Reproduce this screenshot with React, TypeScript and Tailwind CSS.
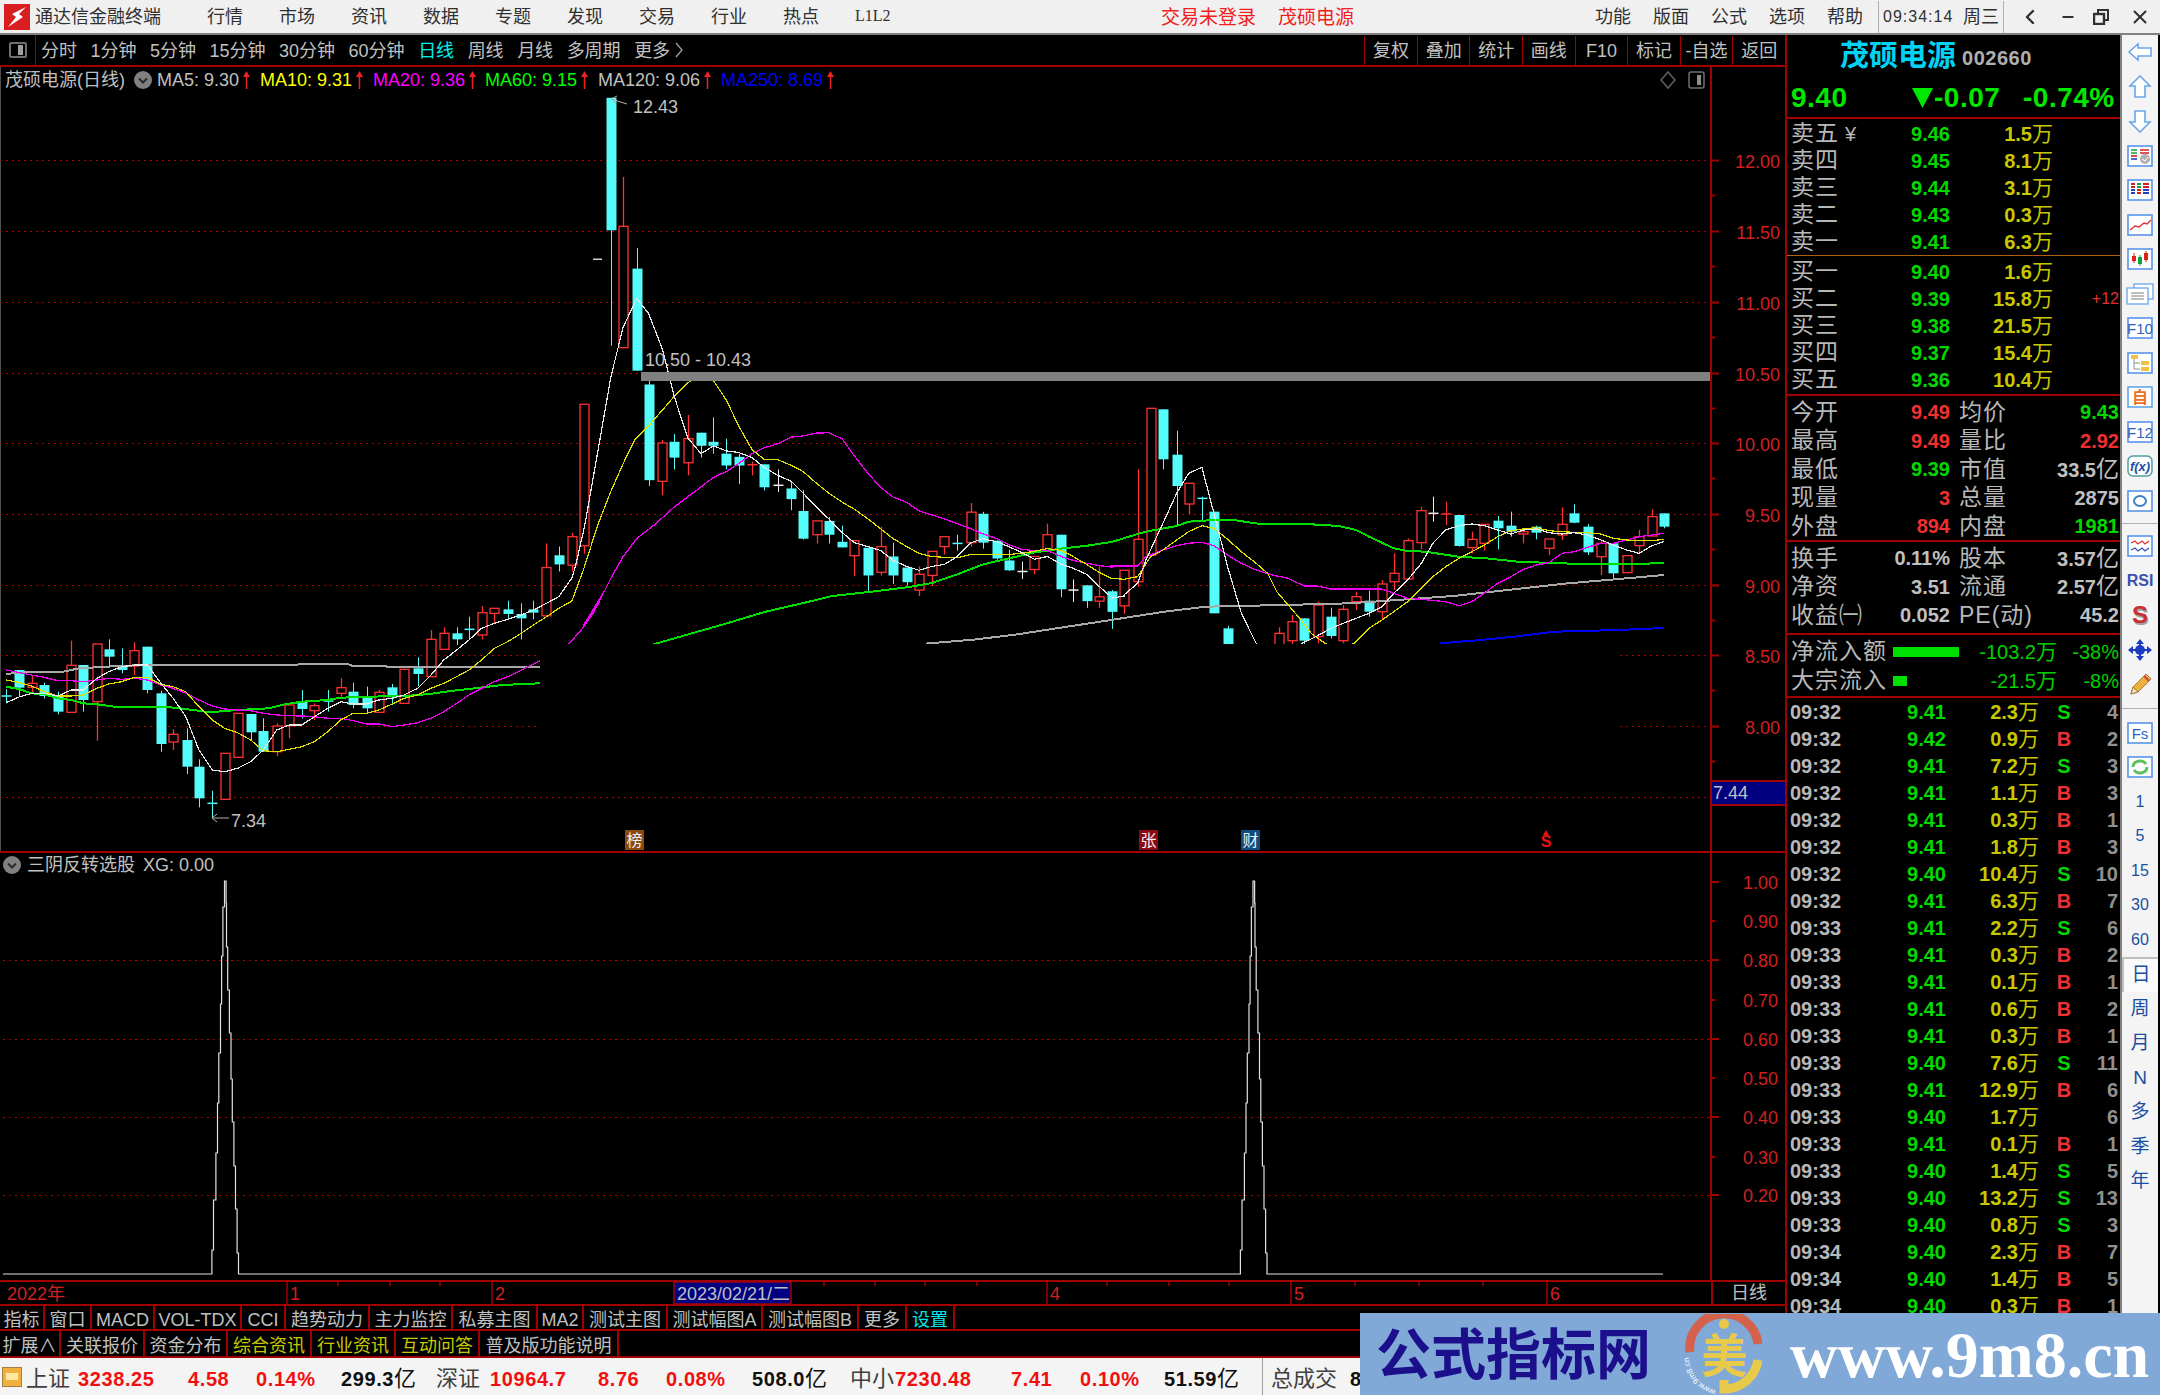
// App.tsx
import { ChevronLeft, Minus, X } from 'lucide-react';

type Seg = { sx: number; ox: number; sy: number; oy: number };
type Candle = [number, number, number, number, number, string];

// chart points were read off three crops, each with its own scale
const A: Seg = { sx: 2.529, ox: 0, sy: 3, oy: 560 };
const B: Seg = { sx: 2.529, ox: 520, sy: 2.529, oy: 80 };
const C: Seg = { sx: 2.178, ox: 1100, sy: 3, oy: 380 };

const px = (s: Seg, x: number) => s.ox + x / s.sx;
const py = (s: Seg, y: number) => s.oy + y / s.sy;

const pts = (s: Seg, str: string) =>
  str
    .trim()
    .split(/\s+/)
    .map((p) => {
      const [x, y] = p.split(',').map(Number);
      return `${px(s, x).toFixed(1)},${py(s, y).toFixed(1)}`;
    })
    .join(' ');

const candlesA: Candle[] = [
  [16, 388, 408, 408, 430, 'x'], [47, 330, 330, 383, 408, 'c'], [80, 345, 370, 382, 400, 'r'], [112, 368, 375, 408, 415, 'c'],
  [146, 395, 408, 455, 463, 'c'], [180, 242, 316, 457, 457, 'r'], [211, 315, 315, 420, 455, 'c'], [245, 252, 252, 425, 542, 'r'],
  [275, 238, 268, 290, 320, 'c'], [308, 265, 315, 330, 340, 'c'], [340, 247, 272, 318, 345, 'r'], [373, 260, 260, 390, 400, 'c'],
  [407, 392, 400, 552, 575, 'c'], [438, 508, 523, 546, 570, 'r'], [472, 505, 540, 620, 642, 'c'], [503, 598, 620, 715, 742, 'c'],
  [537, 692, 730, 730, 775, 'x'], [568, 580, 580, 718, 718, 'r'], [601, 460, 460, 592, 592, 'r'], [634, 462, 462, 517, 540, 'c'],
  [666, 475, 513, 575, 575, 'c'], [700, 490, 498, 575, 588, 'r'], [731, 430, 435, 497, 535, 'r'], [763, 390, 425, 447, 475, 'c'],
  [795, 430, 437, 452, 480, 'r'], [829, 390, 423, 423, 455, 'x'], [862, 355, 383, 400, 410, 'r'], [893, 368, 395, 435, 445, 'c'],
  [927, 380, 410, 445, 460, 'c'], [958, 390, 397, 457, 457, 'r'], [992, 372, 382, 412, 435, 'c'], [1022, 328, 328, 430, 430, 'r'],
  [1056, 292, 325, 342, 378, 'c'], [1090, 210, 238, 350, 350, 'r'], [1122, 202, 220, 268, 268, 'r'], [1155, 202, 220, 238, 255, 'c'],
  [1186, 170, 208, 208, 240, 'x'], [1218, 138, 158, 225, 238, 'r'], [1250, 145, 145, 160, 190, 'r'], [1284, 122, 148, 162, 175, 'c'],
  [1318, 130, 162, 175, 238, 'c'], [1349, 122, 148, 158, 178, 'c'],
];

const candlesB: Candle[] = [
  [67, 1172, 1233, 1355, 1355, 'r'], [98, 1180, 1202, 1225, 1243, 'c'], [131, 1145, 1155, 1227, 1243, 'r'], [163, 820, 820, 1178, 1198, 'r'],
  [230, 45, 45, 380, 672, 'c'], [261, 245, 370, 677, 677, 'r'], [295, 425, 477, 735, 735, 'c'], [325, 760, 770, 1012, 1027, 'c'],
  [360, 910, 918, 1015, 1050, 'r'], [390, 895, 915, 955, 985, 'c'], [424, 847, 907, 968, 1000, 'r'], [458, 892, 892, 925, 955, 'c'],
  [489, 853, 915, 925, 945, 'c'], [522, 907, 945, 975, 985, 'c'], [553, 945, 953, 975, 1022, 'c'], [587, 965, 973, 973, 1000, 'p'],
  [618, 972, 972, 1030, 1038, 'c'], [652, 985, 1025, 1025, 1042, 'w'], [686, 1015, 1033, 1060, 1088, 'c'], [716, 1037, 1090, 1160, 1162, 'c'],
  [750, 1115, 1115, 1150, 1172, 'r'], [781, 1105, 1115, 1150, 1172, 'c'], [815, 1127, 1168, 1182, 1182, 'c'], [845, 1165, 1165, 1203, 1255, 'r'],
  [880, 1183, 1183, 1253, 1295, 'c'], [912, 1130, 1180, 1245, 1253, 'r'], [944, 1170, 1205, 1253, 1275, 'c'], [978, 1233, 1233, 1270, 1278, 'c'],
  [1009, 1230, 1250, 1290, 1305, 'r'], [1042, 1192, 1192, 1253, 1280, 'r'], [1073, 1155, 1155, 1180, 1200, 'r'], [1106, 1150, 1172, 1172, 1190, 'x'],
  [1141, 1070, 1093, 1170, 1180, 'r'], [1171, 1092, 1097, 1170, 1185, 'c'], [1206, 1165, 1165, 1210, 1213, 'c'], [1236, 1188, 1215, 1240, 1242, 'c'],
  [1269, 1218, 1243, 1243, 1262, 'w'], [1301, 1205, 1205, 1238, 1250, 'r'], [1334, 1122, 1150, 1190, 1190, 'r'], [1369, 1150, 1150, 1288, 1308, 'c'],
  [1399, 1263, 1290, 1290, 1320, 'w'], [1433, 1278, 1278, 1318, 1335, 'c'], [1464, 1230, 1307, 1318, 1335, 'r'], [1498, 1290, 1293, 1345, 1388, 'c'],
  [1528, 1240, 1240, 1330, 1350, 'r'],
];

const candlesC: Candle[] = [
  [82, 268, 478, 605, 620, 'r'], [110, 85, 85, 525, 525, 'r'], [137, 88, 88, 238, 268, 'c'], [167, 152, 224, 318, 435, 'c'],
  [193, 310, 310, 372, 402, 'r'], [222, 350, 355, 355, 425, 'x'], [248, 395, 395, 700, 700, 'c'], [278, 738, 745, 800, 800, 'c'],
  [390, 742, 760, 800, 800, 'r'], [418, 705, 725, 782, 800, 'r'], [445, 715, 715, 782, 792, 'c'], [474, 665, 675, 770, 790, 'r'],
  [503, 683, 710, 768, 775, 'c'], [530, 675, 688, 782, 790, 'r'], [558, 635, 650, 665, 690, 'r'], [586, 632, 662, 695, 710, 'c'],
  [614, 600, 612, 695, 720, 'r'], [640, 520, 580, 605, 630, 'r'], [670, 475, 482, 597, 597, 'r'], [700, 382, 392, 488, 508, 'r'],
  [725, 350, 400, 400, 425, 'w'], [753, 365, 402, 402, 435, 'p'], [782, 405, 405, 498, 500, 'c'], [810, 455, 478, 503, 520, 'r'],
  [837, 433, 433, 490, 512, 'r'], [866, 408, 422, 445, 508, 'c'], [895, 395, 437, 455, 470, 'c'], [922, 455, 455, 462, 490, 'r'],
  [950, 437, 440, 458, 478, 'c'], [978, 477, 477, 505, 525, 'r'], [1006, 382, 433, 465, 480, 'r'], [1033, 373, 400, 428, 430, 'c'],
  [1062, 432, 440, 517, 525, 'c'], [1091, 478, 490, 530, 585, 'r'], [1118, 490, 490, 580, 598, 'c'], [1147, 527, 527, 578, 578, 'r'],
  [1174, 450, 470, 497, 522, 'r'], [1202, 388, 410, 468, 468, 'r'], [1228, 400, 400, 440, 445, 'c'],
];

const ma5 = [
  pts(A, '16,428 50,410 80,400 112,400 146,408 180,390 211,390 245,355 275,335 308,320 340,315 373,315 407,370 438,415 470,470 503,570 537,630 568,635 601,625 634,605 666,570 700,510 731,495 763,495 795,470 829,445 862,425 893,432 927,432 958,420 992,415 1022,405 1056,385 1090,345 1122,300 1155,270 1186,240 1218,205 1250,190 1284,178 1318,165 1349,150 1382,130 1413,110'),
  pts(B, '131,1260 140,1230 163,1130 195,950 230,750 261,625 295,553 325,590 360,680 390,800 424,905 458,945 489,925 522,938 553,942 587,955 618,980 652,1000 686,1015 716,1045 750,1080 781,1110 815,1145 845,1170 880,1180 912,1190 944,1215 978,1230 1009,1240 1042,1230 1073,1225 1106,1205 1141,1170 1171,1160 1206,1168 1236,1180 1269,1195 1301,1212 1334,1205 1369,1225 1399,1235 1433,1250 1464,1280 1498,1310 1528,1305'),
  pts(C, '52,645 82,610 100,540 110,510 137,430 167,340 193,280 222,262 248,400 278,560 308,700 340,790 385,890 440,790 470,770 503,745 530,730 558,715 586,700 614,680 640,640 670,600 700,550 725,490 753,450 782,437 810,432 837,437 866,450 895,462 922,450 950,447 978,458 1006,462 1033,458 1062,465 1091,480 1118,495 1147,510 1174,520 1202,497 1228,485'),
].join(' ');

const ma10 = [
  pts(A, '16,360 50,368 80,378 112,395 146,408 180,408 211,405 245,385 275,372 308,365 340,352 373,352 407,373 438,380 470,395 503,440 537,480 568,505 601,518 634,540 666,572 700,575 731,568 763,560 795,545 829,515 862,480 893,460 927,460 958,450 992,432 1022,415 1056,405 1090,385 1122,370 1155,350 1186,330 1218,300 1250,265 1284,245 1318,220 1349,195 1382,170 1413,145'),
  pts(B, '131,1318 160,1240 195,1130 230,1040 261,970 290,910 325,875 360,835 390,800 425,765 460,747 489,760 522,810 553,875 587,935 618,960 652,960 686,975 716,990 750,1020 781,1045 815,1068 845,1085 880,1110 912,1135 944,1160 978,1180 1009,1197 1042,1205 1073,1207 1106,1208 1141,1200 1171,1200 1206,1200 1236,1200 1269,1197 1301,1192 1334,1185 1369,1190 1399,1205 1433,1225 1464,1245 1498,1262'),
  pts(C, '25,595 52,598 82,590 110,530 137,510 167,480 193,455 222,437 248,445 278,478 308,515 340,550 365,580 385,635 410,675 435,715 460,760 490,790 520,810 553,790 586,745 614,720 640,695 670,665 700,625 725,590 753,560 782,535 810,515 837,495 866,470 895,452 922,447 950,443 978,452 1006,455 1033,457 1062,458 1091,462 1118,475 1147,480 1174,482 1202,482 1228,478'),
].join(' ');

const ma20 = [
  pts(A, '16,330 50,338 80,345 112,352 146,362 180,362 211,365 245,360 275,355 308,358 340,355 373,360 407,375 438,385 470,400 503,420 537,438 568,447 601,450 634,452 666,460 700,465 731,467 763,468 795,470 829,475 862,475 893,482 927,492 958,492 992,500 1022,495 1056,488 1090,475 1122,455 1155,430 1186,405 1218,385 1250,365 1284,350 1318,330 1365,302 1440,250 1470,210 1500,160 1530,90'),
  pts(B, '160,1380 195,1330 230,1260 261,1205 295,1160 340,1125 390,1080 450,1035 489,1005 522,990 553,970 587,945 618,930 652,920 686,903 716,900 750,893 781,892 815,908 845,950 880,995 912,1030 944,1055 978,1068 1009,1090 1042,1100 1073,1110 1106,1122 1141,1135 1171,1148 1206,1160 1236,1175 1269,1187 1301,1190 1334,1190 1369,1205 1399,1215 1433,1222 1464,1228 1498,1232'),
  pts(C, '25,558 82,558 100,530 137,510 167,497 193,490 222,487 248,497 278,525 308,550 340,570 375,585 410,595 445,618 474,618 503,627 558,627 614,627 640,640 670,655 700,658 753,665 782,677 810,665 837,640 866,610 895,590 922,568 950,555 978,548 1006,520 1033,515 1062,502 1091,490 1118,490 1147,480 1174,470 1202,465 1228,460'),
].join(' ');

const ma60 = [
  pts(A, '16,380 50,388 80,400 112,403 146,415 180,420 211,430 245,433 290,440 360,442 430,442 490,450 530,457 601,450 680,445 720,433 763,425 829,420 862,413 930,410 1022,408 1056,405 1100,400 1140,393 1200,385 1270,375 1365,370'),
  pts(B, '345,1425 450,1395 520,1375 620,1345 720,1322 790,1305 880,1295 985,1282 1042,1272 1106,1250 1171,1225 1236,1210 1301,1195 1369,1185 1433,1178 1498,1168'),
  pts(C, '82,462 100,455 167,438 193,425 248,420 290,420 350,432 460,433 520,438 558,450 586,470 640,505 670,513 710,515 780,530 840,535 910,545 1000,550 1080,553 1228,550'),
].join(' ');

const ma120 = [
  pts(A, '16,342 50,338 100,335 160,335 200,325 300,318 370,315 745,316 760,312 880,312 890,317 975,317 980,322 1365,320'),
  pts(B, '1000,1460 1030,1425 1150,1415 1250,1403 1400,1380'),
  pts(C, '0,725 70,710 140,695 230,680 400,675 545,670 770,648 940,622 1020,610 1130,597 1228,585'),
].join(' ');

const ma250 = pts(C, '740,790 830,780 900,770 990,755 1130,750 1228,744');

const allCandles = [
  ...candlesA.map((c) => ({ c, s: A })),
  ...candlesB.map((c) => ({ c, s: B })),
  ...candlesC.map((c) => ({ c, s: C })),
];

const priceY = (p: number) => Math.round(726 - (p - 8) * 141.4) + 0.5;
const priceLabels = [12, 11.5, 11, 10.5, 10, 9.5, 9, 8.5, 8];

function CandleMark({ c, s }: { c: Candle; s: Seg }) {
  const [x, wt, bt, bb, wb, t] = c;
  const cx = Math.round(px(s, x)) + 0.5;
  const yWt = py(s, wt);
  const yBt = py(s, bt);
  const yBb = py(s, bb);
  const yWb = py(s, wb);
  if (t === 'x' || t === 'w' || t === 'p') {
    const col = t === 'x' ? '#54fcfc' : t === 'w' ? '#f0f0f0' : '#ff3232';
    return (
      <g stroke={col} strokeWidth={1}>
        <line x1={cx} x2={cx} y1={yWt} y2={yWb} />
        <line x1={cx - 5} x2={cx + 5} y1={yBt} y2={yBt} strokeWidth={1.5} />
      </g>
    );
  }
  if (t === 'c') {
    return (
      <g>
        <line x1={cx} x2={cx} y1={yWt} y2={yWb} stroke="#54fcfc" />
        <rect x={cx - 5} y={yBt} width={10} height={yBb - yBt} fill="#54fcfc" />
      </g>
    );
  }
  return (
    <g stroke="#ff3232" strokeWidth={1.3}>
      <line x1={cx} x2={cx} y1={yWt} y2={yBt} />
      <line x1={cx} x2={cx} y1={yBb} y2={yWb} />
      <rect x={cx - 4.5} y={yBt} width={9} height={yBb - yBt} fill="#000" />
    </g>
  );
}

function MainChart() {
  return (
    <svg width={1787} height={784} viewBox="0 67 1787 784" className="block">
      <line x1={0.5} x2={0.5} y1={67} y2={851} stroke="#505050" />
      {[...priceLabels, 7.5].map((p) => (
        <line key={p} x1={0} x2={1711} y1={priceY(p)} y2={priceY(p)} stroke="#b00000" strokeDasharray="2 4" shapeRendering="crispEdges" />
      ))}
      {allCandles.map(({ c, s }, i) => (
        <CandleMark key={i} c={c} s={s} />
      ))}
      <rect x={593} y={258.5} width={9} height={1.5} fill="#d0d0d0" />
      <polyline points={ma120} fill="none" stroke="#a8a8a8" strokeWidth={2} shapeRendering="crispEdges" />
      <polyline points={ma60} fill="none" stroke="#00e000" strokeWidth={2} shapeRendering="crispEdges" />
      <polyline points={ma20} fill="none" stroke="#f000f0" strokeWidth={1.3} shapeRendering="crispEdges" />
      <polyline points={ma10} fill="none" stroke="#e0e000" strokeWidth={1.2} shapeRendering="crispEdges" />
      <polyline points={ma5} fill="none" stroke="#e8e8e8" strokeWidth={1.2} shapeRendering="crispEdges" />
      <polyline points={ma250} fill="none" stroke="#0000f0" strokeWidth={2} shapeRendering="crispEdges" />
      <rect x={540} y={644} width={1080} height={126} fill="#000" />
      <rect x={641} y={372} width={1070} height={9} fill="#808080" />
      <text x={645} y={366} fontSize={18} fill="#c0c0c0">10.50 - 10.43</text>
      <path d="M611 99 L627 104 M611 99 L617 96 M611 99 L616 103" stroke="#b0b0b0" fill="none" />
      <text x={633} y={113} fontSize={18} fill="#c0c0c0">12.43</text>
      <path d="M212 818 L229 818 M212 818 L217 814 M212 818 L217 822" stroke="#b0b0b0" fill="none" />
      <text x={231} y={827} fontSize={18} fill="#c0c0c0">7.34</text>

      <rect x={625} y={830} width={19} height={20} fill="#8a4a10" />
      <text x={634.5} y={846} fontSize={16} fill="#f0f0f0" textAnchor="middle">榜</text>
      <rect x={1139} y={830} width={19} height={20} fill="#8b0a14" />
      <text x={1148.5} y={846} fontSize={16} fill="#f0f0f0" textAnchor="middle">张</text>
      <rect x={1241} y={830} width={19} height={20} fill="#0f4a80" />
      <text x={1250.5} y={846} fontSize={16} fill="#f0f0f0" textAnchor="middle">财</text>
      <path d="M1546 830 L1549 835 L1543 835 Z" fill="#f01010" />
      <text x={1546} y={847} fontSize={16} fontWeight={700} fill="#f01010" textAnchor="middle">S</text>

      <line x1={1711} x2={1711} y1={67} y2={851} stroke="#a00000" strokeWidth={2} />
      {priceLabels.map((p) => (
        <g key={p}>
          <line x1={1711} x2={1719} y1={priceY(p)} y2={priceY(p)} stroke="#a00000" strokeWidth={2} />
          <line x1={1711} x2={1715} y1={priceY(p) + 35} y2={priceY(p) + 35} stroke="#a00000" strokeWidth={2} />
          <text x={1780} y={priceY(p) + 7} fontSize={18} fill="#d02020" textAnchor="end">{p.toFixed(2)}</text>
        </g>
      ))}
      <rect x={1711} y={781} width={75} height={24} fill="#000080" stroke="#a00000" strokeWidth={2} />
      <text x={1713} y={799} fontSize={18} fill="#c0c0c0">7.44</text>

      <path d="M1668 72 L1675 80 L1668 88 L1661 80 Z" fill="none" stroke="#606060" strokeWidth={1.5} />
      <rect x={1689} y={72} width={15} height={16} rx={2} fill="none" stroke="#707070" strokeWidth={1.5} />
      <rect x={1697} y={75} width={4} height={10} fill="#909090" />
    </svg>
  );
}

const peakLeft: [number, number][] = [[-12.6, 1274], [-12.6, 1250], [-11, 1250], [-11, 1200], [-8.6, 1200], [-8.6, 1153], [-7, 1153], [-7, 1103], [-5.7, 1103], [-5.7, 1053], [-4, 1053], [-4, 1004], [-2.9, 1004], [-2.9, 956], [-1.6, 956], [-1.6, 907], [0, 907], [0, 881]];
const peakRight: [number, number][] = [[1.6, 881], [1.6, 903], [2, 903], [2, 947], [3.2, 947], [3.2, 990], [4.9, 990], [4.9, 1033], [6.5, 1033], [6.5, 1079], [7.8, 1079], [7.8, 1122], [9.4, 1122], [9.4, 1166], [11, 1166], [11, 1209], [12.6, 1209], [12.6, 1253], [14, 1253], [14, 1274]];

const peak = (cx: number) => [...peakLeft, ...peakRight].map(([d, y]) => `${(cx + d).toFixed(1)},${y}`).join(' ');

function IndicatorChart() {
  const labels: [string, number][] = [['1.00', 882], ['0.90', 921], ['0.80', 960], ['0.70', 1000], ['0.60', 1039], ['0.50', 1078], ['0.40', 1117], ['0.30', 1157], ['0.20', 1195]];
  return (
    <svg width={1787} height={427} viewBox="0 853 1787 427" className="block">
      {[960, 1039, 1117, 1195].map((y) => (
        <line key={y} x1={3} x2={1711} y1={y + 0.5} y2={y + 0.5} stroke="#b00000" strokeDasharray="2 4" shapeRendering="crispEdges" />
      ))}
      <polyline points={`3,1274 ${peak(224.5)} ${peak(1253)} 1663,1274`} fill="none" stroke="#e0e0e0" strokeWidth={1.2} />
      <line x1={1711} x2={1711} y1={853} y2={1280} stroke="#a00000" strokeWidth={2} />
      {labels.map(([t, y], i) => (
        <g key={t}>
          <line x1={1711} x2={i % 2 === 0 ? 1719 : 1715} y1={y} y2={y} stroke="#a00000" strokeWidth={2} />
          <text x={1778} y={y + 7} fontSize={18} fill="#d02020" textAnchor="end">{t}</text>
        </g>
      ))}
    </svg>
  );
}

function DateAxis() {
  const major: [string, number][] = [['1', 287], ['2', 492], ['4', 1047], ['5', 1291], ['6', 1547]];
  const minor = [338, 390, 440, 824, 875, 925, 977, 1107, 1169, 1229, 1355, 1419, 1483];
  return (
    <svg width={1711} height={22} viewBox="0 1282 1711 22" className="block">
      <text x={7} y={1300} fontSize={18} fill="#d02020">2022年</text>
      {minor.map((x) => (
        <line key={x} x1={x} x2={x} y1={1282} y2={1286} stroke="#a00000" strokeWidth={1.5} />
      ))}
      {major.map(([t, x]) => (
        <g key={t}>
          <line x1={x} x2={x} y1={1282} y2={1304} stroke="#a00000" strokeWidth={1.5} />
          <text x={x + 3} y={1300} fontSize={18} fill="#d02020">{t}</text>
        </g>
      ))}
      <rect x={674} y={1282} width={117} height={22} fill="#000080" stroke="#a00000" strokeWidth={1.5} />
      <text x={677} y={1300} fontSize={18} fill="#c0c0c0">2023/02/21/二</text>
    </svg>
  );
}

function CircleChevron() {
  return (
    <svg width={18} height={18} viewBox="0 0 18 18">
      <circle cx={9} cy={9} r={9} fill="#808080" />
      <path d="M5 7.5 L9 11.5 L13 7.5" fill="none" stroke="#2a2a2a" strokeWidth={2} />
    </svg>
  );
}

function UpMark() {
  return (
    <svg width={9} height={20} viewBox="0 0 9 20" className="ml-[3px] shrink-0">
      <path d="M4.5 1 L8 7 L1 7 Z" fill="#f02020" />
      <line x1={4.5} x2={4.5} y1={6} y2={19} stroke="#f02020" strokeWidth={1.5} />
    </svg>
  );
}

const legend = [
  { t: 'MA5: 9.30', w: 'w-[103px]', c: 'text-[#c0c0c0]' },
  { t: 'MA10: 9.31', w: 'w-[113px]', c: 'text-[#ffff00]' },
  { t: 'MA20: 9.36', w: 'w-[112px]', c: 'text-[#ff00ff]' },
  { t: 'MA60: 9.15', w: 'w-[113px]', c: 'text-[#00ff00]' },
  { t: 'MA120: 9.06', w: 'w-[123px]', c: 'text-[#c0c0c0]' },
  { t: 'MA250: 8.69', w: 'w-[120px]', c: 'text-[#0000ff]' },
];

const periods = ['分时', '1分钟', '5分钟', '15分钟', '30分钟', '60分钟', '日线', '周线', '月线', '多周期', '更多'];
const toolButtons = ['复权', '叠加', '统计', '画线', 'F10', '标记', '-自选', '返回'];

const tabsOne = [
  { t: '指标', w: 'w-[45px]' }, { t: '窗口', w: 'w-[47px]' }, { t: 'MACD', w: 'w-[63px]' }, { t: 'VOL-TDX', w: 'w-[87px]' },
  { t: 'CCI', w: 'w-[44px]' }, { t: '趋势动力', w: 'w-[84px]' }, { t: '主力监控', w: 'w-[83px]' }, { t: '私募主图', w: 'w-[85px]' },
  { t: 'MA2', w: 'w-[46px]' }, { t: '测试主图', w: 'w-[84px]' }, { t: '测试幅图A', w: 'w-[95px]' }, { t: '测试幅图B', w: 'w-[96px]' },
  { t: '更多', w: 'w-[48px]' }, { t: '设置', w: 'w-[48px]', c: 'text-[#00e8e8]' },
];

const tabsTwo = [
  { t: '扩展∧', w: 'w-[61px]' }, { t: '关联报价', w: 'w-[84px]' }, { t: '资金分布', w: 'w-[83px]' }, { t: '综合资讯', w: 'w-[84px]', c: 'text-[#c8c800]' },
  { t: '行业资讯', w: 'w-[84px]', c: 'text-[#c8c800]' }, { t: '互动问答', w: 'w-[84px]', c: 'text-[#c8c800]' }, { t: '普及版功能说明', w: 'w-[139px]' },
];

const sellRows = [
  ['卖五', '9.46', '1.5'], ['卖四', '9.45', '8.1'], ['卖三', '9.44', '3.1'], ['卖二', '9.43', '0.3'], ['卖一', '9.41', '6.3'],
];
const buyRows = [
  ['买一', '9.40', '1.6'], ['买二', '9.39', '15.8'], ['买三', '9.38', '21.5'], ['买四', '9.37', '15.4'], ['买五', '9.36', '10.4'],
];

const GREEN = 'text-[#00d800]';
const RED = 'text-[#f03030]';
const GREY = 'text-[#c0c0c0]';

const statRows = [
  ['今开', '9.49', RED, '均价', '9.43', '', GREEN],
  ['最高', '9.49', RED, '量比', '2.92', '', RED],
  ['最低', '9.39', GREEN, '市值', '33.5', '亿', GREY],
  ['现量', '3', RED, '总量', '2875', '', GREY],
  ['外盘', '894', RED, '内盘', '1981', '', GREEN],
];
const fundRows = [
  ['换手', '0.11%', GREY, '股本', '3.57', '亿', GREY],
  ['净资', '3.51', GREY, '流通', '2.57', '亿', GREY],
  ['收益㈠', '0.052', GREY, 'PE(动)', '45.2', '', GREY],
];

const ticks: [string, string, string, string, string][] = [
  ['09:32', '9.41', '2.3', 'S', '4'], ['09:32', '9.42', '0.9', 'B', '2'], ['09:32', '9.41', '7.2', 'S', '3'], ['09:32', '9.41', '1.1', 'B', '3'],
  ['09:32', '9.41', '0.3', 'B', '1'], ['09:32', '9.41', '1.8', 'B', '3'], ['09:32', '9.40', '10.4', 'S', '10'], ['09:32', '9.41', '6.3', 'B', '7'],
  ['09:33', '9.41', '2.2', 'S', '6'], ['09:33', '9.41', '0.3', 'B', '2'], ['09:33', '9.41', '0.1', 'B', '1'], ['09:33', '9.41', '0.6', 'B', '2'],
  ['09:33', '9.41', '0.3', 'B', '1'], ['09:33', '9.40', '7.6', 'S', '11'], ['09:33', '9.41', '12.9', 'B', '6'], ['09:33', '9.40', '1.7', '', '6'],
  ['09:33', '9.41', '0.1', 'B', '1'], ['09:33', '9.40', '1.4', 'S', '5'], ['09:33', '9.40', '13.2', 'S', '13'], ['09:33', '9.40', '0.8', 'S', '3'],
  ['09:34', '9.40', '2.3', 'B', '7'], ['09:34', '9.40', '1.4', 'B', '5'], ['09:34', '9.40', '0.3', 'B', '1'],
];

function Wan({ v }: { v: string }) {
  return (
    <span className="text-[#c8c800]">
      <b>{v}</b>
      <span className="text-[21px]">万</span>
    </span>
  );
}

function QuoteRows({ rows }: { rows: string[][] }) {
  return (
    <>
      {rows.map((r) => (
        <div key={r[0]} className="grid h-[28.5px] grid-cols-[163px_169px] items-center">
          <div className="flex items-center justify-between pl-1">
            <span className="text-[23px] tracking-[1px] text-[#b8b8b8]">{r[0]}</span>
            <b className={r[2]}>{r[1]}</b>
          </div>
          <div className="flex items-center justify-between pl-[9px]">
            <span className="text-[23px] tracking-[1px] text-[#b8b8b8]">{r[3]}</span>
            <span className={r[6]}>
              <b>{r[4]}</b>
              {r[5] && <span className="text-[23px]">{r[5]}</span>}
            </span>
          </div>
        </div>
      ))}
    </>
  );
}

function Frame({ children, stroke = '#4f8de8' }: { children: React.ReactNode; stroke?: string }) {
  return (
    <svg width={26} height={22} viewBox="0 0 26 22">
      <rect x={1} y={1} width={24} height={20} fill="#fff" stroke={stroke} strokeWidth={1.5} />
      {children}
    </svg>
  );
}

function Arrow({ d }: { d: string }) {
  return (
    <svg width={26} height={24} viewBox="0 0 26 24">
      <path d={d} fill="#fff" stroke="#6aa6ea" strokeWidth={1.6} />
    </svg>
  );
}

function FrameText({ t, size = 15 }: { t: string; size?: number }) {
  return (
    <text x={13} y={16.5} fontSize={size} textAnchor="middle" fill="#2a62c0">{t}</text>
  );
}

const sideTop = [
  <Arrow key="l" d="M2 12 L11 4 L11 8 L24 8 L24 16 L11 16 L11 20 Z" />,
  <Arrow key="u" d="M13 1 L23 11 L18 11 L18 22 L8 22 L8 11 L3 11 Z" />,
  <Arrow key="d" d="M13 23 L23 13 L18 13 L18 2 L8 2 L8 13 L3 13 Z" />,
  <Frame key="a">
    <path d="M4 5 H10 M4 8 H10" stroke="#10a040" strokeWidth={1.6} /><path d="M4 11 H10" stroke="#d02020" strokeWidth={1.6} /><path d="M4 14 H10" stroke="#2040c0" strokeWidth={1.6} />
    <path d="M13 5 H22 M13 8 H22" stroke="#d02020" strokeWidth={1.6} />
    <circle cx={18} cy={14} r={5} fill="#b0b0b0" /><path d="M15 14 L18 16 L21 12" stroke="#fff" fill="none" />
  </Frame>,
  <Frame key="b">
    <path d="M4 5 H8 M4 8 H8" stroke="#d02020" strokeWidth={2} /><path d="M4 11 H8 M4 14 H8" stroke="#2040c0" strokeWidth={2} />
    <path d="M10 5 H14 M10 8 H14" stroke="#10a040" strokeWidth={2} /><path d="M10 11 H14 M10 14 H14" stroke="#d02020" strokeWidth={2} />
    <path d="M16 5 H22 M16 8 H22" stroke="#d02020" strokeWidth={2} /><path d="M16 11 H22 M16 14 H22" stroke="#2040c0" strokeWidth={2} />
  </Frame>,
  <Frame key="c">
    <path d="M3 16 L8 12 L12 13 L17 9 L20 10 L24 6" fill="none" stroke="#e03030" strokeWidth={1.4} />
  </Frame>,
  <Frame key="d2">
    <path d="M7 5 V15" stroke="#d02020" /><rect x={5} y={8} width={4} height={5} fill="#e02020" />
    <path d="M13 7 V18" stroke="#10a040" /><rect x={11} y={9} width={4} height={7} fill="#10a040" />
    <path d="M19 3 V14" stroke="#d02020" /><rect x={17} y={5} width={4} height={7} fill="#e02020" />
  </Frame>,
  <svg key="e" width={28} height={22} viewBox="0 0 28 22">
    <rect x={8} y={1} width={19} height={15} fill="#fff" stroke="#6aa6ea" strokeWidth={1.3} />
    <rect x={1} y={5} width={21} height={16} fill="#fff" stroke="#6aa6ea" strokeWidth={1.3} />
    <path d="M5 10 H18 M5 13 H18 M5 16 H18" stroke="#808080" />
  </svg>,
  <Frame key="f10"><FrameText t="F10" /></Frame>,
  <Frame key="t">
    <rect x={4} y={3} width={7} height={4} fill="#f0c040" /><path d="M7 7 V17 H13 M7 11 H13" stroke="#909090" fill="none" />
    <rect x={14} y={9} width={8} height={4} fill="#f0c040" /><rect x={14} y={15} width={8} height={4} fill="#f0c040" />
  </Frame>,
  <Frame key="z" stroke="#5aa0e8">
    <text x={13} y={17} fontSize={16} textAnchor="middle" fill="#f07020" fontWeight={700}>自</text>
  </Frame>,
  <Frame key="f12"><FrameText t="F12" /></Frame>,
  <svg key="fx" width={26} height={22} viewBox="0 0 26 22">
    <rect x={1} y={1} width={24} height={20} rx={5} fill="#fff" stroke="#50a0a0" strokeWidth={1.5} />
    <text x={13} y={16} fontSize={13} textAnchor="middle" fill="#2050a0" fontStyle="italic" fontWeight={700}>f(x)</text>
  </svg>,
  <Frame key="o"><ellipse cx={13} cy={11} rx={6} ry={5} fill="none" stroke="#3a80d0" strokeWidth={2} /></Frame>,
];

const sideMid = [
  <Frame key="w">
    <path d="M4 8 L8 6 L11 9 L15 6 L18 9 L22 6" fill="none" stroke="#e03030" strokeWidth={1.3} />
    <path d="M4 15 L8 13 L11 16 L15 13 L18 16 L22 13" fill="none" stroke="#3050c0" strokeWidth={1.3} />
  </Frame>,
  <span key="r" className="text-[16px] font-bold text-[#3a50b0]">RSI</span>,
  <span key="s" className="text-[24px] font-bold text-[#c83030] [text-shadow:1px_2px_0_#a0a0a0]">S</span>,
  <svg key="m" width={26} height={24} viewBox="0 0 26 24">
    <path d="M13 1 L17 6 L9 6 Z M13 23 L17 18 L9 18 Z M1 12 L6 8 L6 16 Z M25 12 L20 8 L20 16 Z" fill="#1c3cc0" />
    <circle cx={13} cy={12} r={5} fill="#1c3cc0" />
    <path d="M6 12 H20 M13 6 V18" stroke="#1c3cc0" strokeWidth={2} />
  </svg>,
  <svg key="p" width={26} height={24} viewBox="0 0 26 24">
    <path d="M4 22 L6 15 L19 2 L24 7 L11 20 Z" fill="#f0b040" stroke="#a08030" />
    <path d="M4 22 L6 15 L11 20 Z" fill="#f0e0c0" stroke="#a08030" />
    <path d="M17 4 L22 9" stroke="#d04040" strokeWidth={2} />
  </svg>,
];

const sideBottomLabels = ['1', '5', '15', '30', '60'];
const sideBottomCjk = ['周', '月', 'N', '多', '季', '年'];

function SideBar() {
  return (
    <div className="flex w-[36px] shrink-0 flex-col items-center bg-[#f4f4f4]">
      {sideTop.map((icon, i) => (
        <div key={i} className="flex h-[34.5px] items-center justify-center">{icon}</div>
      ))}
      <div className="flex h-[11px] w-full items-center"><div className="h-px w-full bg-[#b0b0b0]" /></div>
      {sideMid.map((icon, i) => (
        <div key={i} className="flex h-[34.5px] items-center justify-center">{icon}</div>
      ))}
      <div className="flex h-[14px] w-full items-center"><div className="h-px w-full bg-[#b0b0b0]" /></div>
      <div className="flex h-[34.5px] items-center justify-center">
        <Frame><FrameText t="Fs" /></Frame>
      </div>
      <div className="flex h-[34.5px] items-center justify-center">
        <Frame>
          <path d="M6 11 A7 6 0 0 1 19 8" fill="none" stroke="#60c060" strokeWidth={3} />
          <path d="M20 11 A7 6 0 0 1 7 14" fill="none" stroke="#60c060" strokeWidth={3} />
        </Frame>
      </div>
      {sideBottomLabels.map((t) => (
        <div key={t} className="flex h-[34.5px] items-center justify-center text-[16px] text-[#1a4fa0]">{t}</div>
      ))}
      <div className="flex h-[34.5px] w-full items-center justify-center border-t-2 border-l-2 border-[#c0c0c0] bg-[#fafafa] text-[19px] text-[#1a4fa0]">日</div>
      {sideBottomCjk.map((t) => (
        <div key={t} className="flex h-[34.5px] items-center justify-center text-[19px] text-[#1a4fa0]">{t}</div>
      ))}
    </div>
  );
}

function RightPanel() {
  return (
    <div className="h-[1323px] w-[337px] shrink-0 overflow-hidden border-l-2 border-r-2 border-l-[#a00000] border-r-[#808080] bg-black text-[20px] leading-none">
      <div className="flex h-[41px] items-end pb-[5px] pl-[53px]">
        <span className="text-[29px] font-bold text-[#00d4f4]">茂硕电源</span>
        <b className="ml-[6px] pb-[3px] tracking-[0.5px] text-[#b0b0b0]">002660</b>
      </div>
      <div className="flex h-[43px] items-center border-b-2 border-[#a00000] pt-[3px] pl-1 text-[28px] font-bold tracking-[0.5px] text-[#00e800]">
        <span className="w-[121px]">9.40</span>
        <span className="flex w-[111px] items-center whitespace-nowrap">
          <svg width={22} height={20} viewBox="0 0 22 20" className="shrink-0">
            <path d="M0 0 H21 L10.5 20 Z" fill="#00e800" />
          </svg>
          -0.07
        </span>
        <span className="whitespace-nowrap">-0.74%</span>
      </div>
      <div className="h-[137px] border-b border-[#b06010] pt-[1px]">
        {sellRows.map((r, i) => (
          <div key={r[0]} className="grid h-[27px] grid-cols-[163px_103px_66px] items-center">
            <div className="flex items-center justify-between pl-1">
              <span className="text-[23px] tracking-[1px] text-[#b8b8b8]">
                {r[0]}
                {i === 0 && <span className="ml-[6px] text-[20px]">¥</span>}
              </span>
              <b className={GREEN}>{r[1]}</b>
            </div>
            <div className="text-right"><Wan v={r[2]} /></div>
          </div>
        ))}
      </div>
      <div className="h-[140px] border-b-2 border-[#a00000] pt-[2px]">
        {buyRows.map((r, i) => (
          <div key={r[0]} className="grid h-[27px] grid-cols-[163px_103px_66px] items-center">
            <div className="flex items-center justify-between pl-1">
              <span className="text-[23px] tracking-[1px] text-[#b8b8b8]">{r[0]}</span>
              <b className={GREEN}>{r[1]}</b>
            </div>
            <div className="text-right"><Wan v={r[2]} /></div>
            {i === 1 && <div className="text-right text-[16px] text-[#e03030]">+12</div>}
          </div>
        ))}
      </div>
      <div className="h-[146px] border-b-2 border-[#a00000] pt-[2px]"><QuoteRows rows={statRows} /></div>
      <div className="h-[93px] border-b-2 border-[#a00000] pt-[2px]"><QuoteRows rows={fundRows} /></div>
      <div className="h-[63px] border-b-2 border-[#a00000] pt-[2px]">
        <div className="grid h-[29px] grid-cols-[106px_66px_98px_62px] items-center">
          <span className="pl-1 text-[23px] tracking-[1px] text-[#b8b8b8] whitespace-nowrap">净流入额</span>
          <div className="h-[10px] bg-[#00e000]" />
          <span className="whitespace-nowrap text-right text-[#00d000]">-103.2<span className="text-[21px]">万</span></span>
          <span className="text-right text-[#00d000]">-38%</span>
        </div>
        <div className="grid h-[29px] grid-cols-[106px_66px_98px_62px] items-center">
          <span className="pl-1 text-[23px] tracking-[1px] text-[#b8b8b8] whitespace-nowrap">大宗流入</span>
          <div className="h-[10px] w-[14px] bg-[#00e000]" />
          <span className="whitespace-nowrap text-right text-[#00d000]">-21.5<span className="text-[21px]">万</span></span>
          <span className="text-right text-[#00d000]">-8%</span>
        </div>
      </div>
      {ticks.map((r, i) => (
        <div key={i} className="grid h-[27px] grid-cols-[159px_93px_50px_29px] items-center">
          <div className="flex items-center justify-between pl-[3px]">
            <b className="text-[#b8b8b8]">{r[0]}</b>
            <b className={GREEN}>{r[1]}</b>
          </div>
          <div className="text-right"><Wan v={r[2]} /></div>
          <b className={`text-center ${r[3] === 'S' ? GREEN : RED}`}>{r[3]}</b>
          <b className="text-right text-[#909090]">{r[4]}</b>
        </div>
      ))}
    </div>
  );
}

function TabRow({ items, className, cellPad }: { items: { t: string; w: string; c?: string }[]; className: string; cellPad: string }) {
  return (
    <div className={`flex border-b-2 border-[#a00000] text-[18px] leading-none text-[#c0c0c0] ${className}`}>
      {items.map((it) => (
        <div key={it.t} className={`flex shrink-0 items-center justify-center whitespace-nowrap border-r-2 border-[#a00000] ${cellPad} ${it.w} ${it.c ?? ''}`}>{it.t}</div>
      ))}
    </div>
  );
}

function TopBar() {
  return (
    <div className="flex h-[35px] items-center border-b-2 border-[#808080] bg-[#f0f0f0] pt-[1px] text-[18px] leading-none text-[#303030]">
      <svg width={26} height={26} viewBox="0 0 26 26" className="ml-1 shrink-0">
        <rect width={26} height={26} fill="#d81e1e" />
        <path d="M22 3 L8 10 L12 13 L4 23 L19 13 L15 10 Z" fill="#fff" />
      </svg>
      <span className="ml-[5px] whitespace-nowrap">通达信金融终端</span>
      <div className="ml-[46px] flex w-[684px] gap-[36px]">
        {['行情', '市场', '资讯', '数据', '专题', '发现', '交易', '行业', '热点'].map((t) => (
          <span key={t} className="whitespace-nowrap">{t}</span>
        ))}
        <span className="whitespace-nowrap font-['Liberation_Serif',serif] text-[16px]">L1L2</span>
      </div>
      <span className="ml-[270px] whitespace-nowrap text-[#f02020] text-[19px]">交易未登录</span>
      <span className="ml-[22px] whitespace-nowrap text-[#f02020] text-[19px]">茂硕电源</span>
      <div className="ml-[241px] flex gap-[22px]">
        {['功能', '版面', '公式', '选项', '帮助'].map((t) => (
          <span key={t} className="whitespace-nowrap">{t}</span>
        ))}
      </div>
      <div className="ml-[15px] flex h-full items-center border-x border-[#b0b0b0] px-[4px]">
        <span className="w-[80px] whitespace-nowrap text-[16px] tracking-[1px]">09:34:14</span>
        <span className="whitespace-nowrap">周三</span>
      </div>
      <ChevronLeft size={24} strokeWidth={2.4} className="ml-[14px] shrink-0" />
      <Minus size={16} strokeWidth={3} className="ml-[18px] shrink-0" />
      <svg width={16} height={16} viewBox="0 0 16 16" className="ml-[17px] shrink-0">
        <rect x={5} y={1} width={10} height={10} fill="none" stroke="#303030" strokeWidth={2} />
        <rect x={1} y={5} width={10} height={10} fill="#f0f0f0" stroke="#303030" strokeWidth={2.4} />
      </svg>
      <X size={22} strokeWidth={2.2} className="ml-[20px] shrink-0" />
    </div>
  );
}

function Toolbar() {
  return (
    <div className="flex h-[32px] items-center border-b-2 border-[#a00000] text-[18px] leading-none text-[#c0c0c0]">
      <div className="flex h-full w-[36px] shrink-0 items-center justify-center border-r border-[#a00000]">
        <div className="flex h-[16px] w-[18px] items-center justify-end rounded-[2px] border-2 border-[#707070] pr-[2px]">
          <div className="h-[10px] w-[5px] bg-[#a0a0a0]" />
        </div>
      </div>
      <div className="ml-[5px] flex gap-[13.5px] pt-[2px]">
        {periods.map((t) => (
          <span key={t} className={`whitespace-nowrap ${t === '日线' ? 'text-[#00f0f0]' : ''}`}>{t}</span>
        ))}
      </div>
      <svg width={8} height={16} viewBox="0 0 8 16" className="ml-[5px] shrink-0">
        <path d="M1 1 L7 8 L1 15" fill="none" stroke="#a0a0a0" strokeWidth={1.3} />
      </svg>
      <div className="ml-auto flex h-full pt-[1px]">
        {toolButtons.map((t) => (
          <div key={t} className="flex h-full w-[52.6px] items-center justify-center whitespace-nowrap border-l border-[#a00000]">{t}</div>
        ))}
      </div>
    </div>
  );
}

function StatusBar() {
  const num = 'shrink-0 whitespace-nowrap text-[20px] font-bold tracking-[0.6px] text-[#f01010]';
  const black = 'shrink-0 whitespace-nowrap text-[20px] font-bold tracking-[0.6px] text-[#101010]';
  const label = 'shrink-0 whitespace-nowrap text-[22px] text-[#404040]';
  return (
    <div className="flex h-[37px] items-center overflow-hidden bg-[#f4f4f4] leading-none">
      <div className="ml-[2px] mr-[4px] flex h-[20px] w-[20px] shrink-0 items-center justify-center border border-[#a08040] bg-[#f0b040]">
        <div className="h-[7px] w-[12px] bg-[#ffe8a0]" />
      </div>
      <div className="flex items-center pt-[5px]">
        <span className={`${label} w-[52px]`}>上证</span>
        <span className={`${num} w-[110px]`}>3238.25</span>
        <span className={`${num} w-[68px]`}>4.58</span>
        <span className={`${num} w-[85px]`}>0.14%</span>
        <span className={`${black} w-[95px]`}>299.3<span className="font-normal text-[22px]">亿</span></span>
        <span className={`${label} w-[54px]`}>深证</span>
        <span className={`${num} w-[108px]`}>10964.7</span>
        <span className={`${num} w-[68px]`}>8.76</span>
        <span className={`${num} w-[86px]`}>0.08%</span>
        <span className={`${black} w-[98px]`}>508.0<span className="font-normal text-[22px]">亿</span></span>
        <span className={`${label} w-[45px]`}>中小</span>
        <span className={`${num} w-[116px]`}>7230.48</span>
        <span className={`${num} w-[69px]`}>7.41</span>
        <span className={`${num} w-[84px]`}>0.10%</span>
        <span className={`${black} w-[98px]`}>51.59<span className="font-normal text-[22px]">亿</span></span>
      </div>
      <div className="h-full w-px shrink-0 bg-[#a0a0a0]" />
      <div className="ml-[8px] flex items-center pt-[5px]">
        <span className={`${label} w-[79px]`}>总成交</span>
        <span className={black}>8</span>
      </div>
    </div>
  );
}

function Watermark() {
  return (
    <div className="absolute left-[1360px] top-[1313px] flex h-[82px] w-[800px] items-center overflow-hidden bg-[#80a9d8] pt-[2px]">
      <span className="ml-[16px] w-[290px] whitespace-nowrap text-[55px] font-bold leading-none text-[#1c0f8c]">公式指标网</span>
      <svg width={84} height={82} viewBox="0 0 84 82" className="ml-[16px] shrink-0">
        <defs>
          <path id="wm-arc" d="M34 76 A35 35 0 0 1 7 44" />
        </defs>
        <path d="M8 38 A34 34 0 0 1 76 30" fill="none" stroke="#d4614c" strokeWidth={9} />
        <path d="M76 46 A34 34 0 0 1 42 75 L42 66" fill="none" stroke="#e8c94a" strokeWidth={9} />
        <text fontSize={8} fill="#ffffff">
          <textPath href="#wm-arc">www.9m8.cn</textPath>
        </text>
        <circle cx={42} cy={10} r={5} fill="#e8c94a" />
        <text x={42} y={58} fontSize={46} fontWeight={700} fill="#e8c94a" textAnchor="middle">美</text>
      </svg>
      <span className="ml-[24px] whitespace-nowrap font-['Liberation_Serif',serif] text-[66px] font-bold leading-none text-white">www.9m8.cn</span>
    </div>
  );
}

export default function App() {
  return (
    <div className="relative h-[1395px] w-[2160px] overflow-hidden bg-black font-['Liberation_Sans','Noto_Sans_CJK_SC',sans-serif]">
      <TopBar />
      <div className="flex h-[1323px]">
        <div className="flex w-[1785px] shrink-0 flex-col">
          <Toolbar />
          <div className="relative h-[786px] border-b-2 border-[#a00000]">
            <MainChart />
            <div className="absolute left-[5px] top-[3px] flex h-[20px] items-center text-[18px] leading-none text-[#c0c0c0]">
              <span className="w-[129px] whitespace-nowrap">茂硕电源(日线)</span>
              <CircleChevron />
              <div className="ml-[5px] flex">
                {legend.map((m) => (
                  <div key={m.t} className={`flex items-center ${m.w} ${m.c}`}>
                    <span className="whitespace-nowrap">{m.t}</span>
                    <UpMark />
                  </div>
                ))}
              </div>
            </div>
          </div>
          <div className="relative h-[429px] border-b-2 border-[#a00000]">
            <IndicatorChart />
            <div className="absolute left-[3px] top-[2px] flex h-[20px] items-center text-[18px] leading-none text-[#c0c0c0]">
              <CircleChevron />
              <span className="ml-[6px] whitespace-nowrap">三阴反转选股</span>
              <span className="ml-[8px] whitespace-nowrap">XG: 0.00</span>
            </div>
          </div>
          <div className="flex h-[24px] border-b-2 border-[#a00000]">
            <DateAxis />
            <div className="flex flex-1 items-center justify-center border-l-2 border-[#a00000] text-[18px] leading-none text-[#c0c0c0]">日线</div>
          </div>
          <TabRow items={tabsOne} className="h-[25px]" cellPad="pt-[4px]" />
          <TabRow items={tabsTwo} className="h-[27px]" cellPad="pt-[5px]" />
        </div>
        <RightPanel />
        <SideBar />
      </div>
      <StatusBar />
      <Watermark />
    </div>
  );
}
